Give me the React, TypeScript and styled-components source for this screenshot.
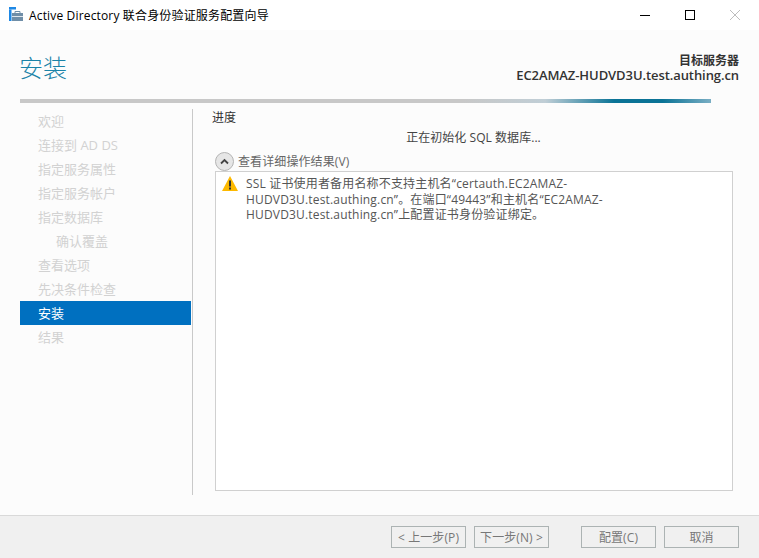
import React from "react";
import styled, { createGlobalStyle } from "styled-components";

const Global = createGlobalStyle`
  html, body { margin: 0; padding: 0; background: #fff; }
  body { font-family: "Open Sans", "Noto Sans CJK SC", sans-serif; font-size: 12px; }
`;

const Win = styled.div`
  width: 759px; height: 558px; display: flex; flex-direction: column; overflow: hidden; background: #fcfcfc;
`;
const TitleBar = styled.div`
  height: 30px; flex: none; background: #fff; display: flex; align-items: center; padding-left: 9px;
`;
const AppIcon = styled.svg`
  flex: none; margin-bottom: 2px;
`;
const TitleText = styled.div`
  font-size: 12px; letter-spacing: 0.16px; color: #000; margin-left: 6px; flex: 1; white-space: nowrap;
`;
const WinBtn = styled.div`
  width: 45px; height: 30px; display: flex; align-items: center; justify-content: center;
`;
const Controls = styled.div`
  display: flex; padding-right: 2px; gap: 0;
`;
const Header = styled.div`
  height: 69px; flex: none; padding: 0 20px; display: flex; justify-content: space-between; align-items: flex-start;
`;
const PageTitle = styled.h1`
  margin: 18px 0 0 -1px; font-size: 24px; font-weight: 300; line-height: 40px; color: #1a83a8;
`;
const Server = styled.div`
  margin-top: 23px; text-align: right; color: #333; font-size: 12px; line-height: 15px; font-weight: 600;
`;
const ServerName = styled.div`
  font-size: 13px; letter-spacing: -0.08px; white-space: nowrap;
`;
const Rule = styled.div`
  height: 4px; flex: none; margin: 0 48px 0 20px;
  background: linear-gradient(90deg, #c8c8c8 0%, #c8c8c8 64%, #c0ced6 76%, #0a7396 86%, #0a7396 93%, #7aaec4 100%);
`;
const Body = styled.div`
  flex: 1; min-height: 0; display: flex; padding: 6px 26px 0 20px;
`;
const Side = styled.nav`
  width: 172px; flex: none; margin-right: 21px; height: 386px; border-right: 1px solid #c9c9c9; box-sizing: content-box;
`;
const SideItem = styled.div<{ $active?: boolean; $indent?: boolean }>`
  height: 24px; margin-right: 1px; line-height: 24px; font-size: 13px; white-space: nowrap;
  padding-left: ${(p) => (p.$indent ? 36 : 18)}px;
  color: ${(p) => (p.$active ? "#fff" : "#d2d2d2")};
  background: ${(p) => (p.$active ? "#0070c0" : "transparent")};
`;
const Main = styled.div`
  flex: 1; min-width: 0; display: flex; flex-direction: column; margin-left: -2px;
`;
const Label = styled.div`
  font-size: 12px; line-height: 16px; color: #333; margin-top: 1px;
`;
const Status = styled.div`
  font-size: 12px; letter-spacing: 0.05px; line-height: 16px; color: #444; text-align: center; margin-top: 4px; padding-left: 2px;
`;
const Toggle = styled.div`
  display: flex; align-items: center; gap: 4px; margin: 5px 0 0 3px; height: 20px; color: #666; font-size: 12px; letter-spacing: 0.1px;
`;
const ToggleBtn = styled.div`
  width: 19px; height: 19px; box-sizing: border-box; border-radius: 50%; border: 1px solid #b4b4b4; background: #e6e6e6;
  display: flex; align-items: center; justify-content: center;
`;
const ResultBox = styled.div`
  margin: 0 0 0 3px; height: 320px; border: 1px solid #d0d0d0; background: #fff; display: flex; padding: 4px 6px 0 6px; box-sizing: border-box;
`;
const Message = styled.div`
  margin-left: 8px; font-size: 12px; letter-spacing: 0.17px; line-height: 15.5px; color: #555; width: 400px;
`;
const Footer = styled.div`
  height: 42px; flex: none; background: #f0f0f0; border-top: 1px solid #d9d9d9; display: flex; align-items: center; justify-content: flex-end; padding: 0 20px 0 0; box-sizing: content-box;
`;
const Btn = styled.div<{ $gap?: number }>`
  width: 75px; height: 22px; box-sizing: border-box; border: 1px solid #acb3b3; color: #777; font-size: 12px; letter-spacing: 0.1px;
  display: flex; align-items: center; justify-content: center; margin-left: ${(p) => p.$gap ?? 8}px; white-space: nowrap;
`;

const items = ["欢迎", "连接到 AD DS", "指定服务属性", "指定服务帐户", "指定数据库", "确认覆盖", "查看选项", "先决条件检查", "安装", "结果"];

export default function App() {
  return (
    <Win>
      <Global />
      <TitleBar>
        <AppIcon width="14" height="14" viewBox="0 0 14 14">
          <rect x="0" y="0" width="7" height="2.5" fill="#1e88e5" />
          <rect x="0" y="2.5" width="2.5" height="11.5" fill="#1e88e5" />
          <rect x="3" y="6" width="11" height="8" fill="#6f8ea8" />
          <rect x="3" y="9" width="11" height="1" fill="#dfe6ec" />
          <path d="M6 6V4.5h5V6" fill="none" stroke="#6f8ea8" strokeWidth="1" />
        </AppIcon>
        <TitleText>Active Directory 联合身份验证服务配置向导</TitleText>
        <Controls>
          <WinBtn>
            <svg width="10" height="10"><path d="M0 5.5h10" stroke="#000" /></svg>
          </WinBtn>
          <WinBtn>
            <svg width="10" height="10"><rect x=".5" y=".5" width="9" height="9" fill="none" stroke="#000" /></svg>
          </WinBtn>
          <WinBtn>
            <svg width="10" height="10"><path d="M0 0l10 10M10 0L0 10" stroke="#bdbdbd" /></svg>
          </WinBtn>
        </Controls>
      </TitleBar>
      <Header>
        <PageTitle>安装</PageTitle>
        <Server>
          <div>目标服务器</div>
          <ServerName>EC2AMAZ-HUDVD3U.test.authing.cn</ServerName>
        </Server>
      </Header>
      <Rule />
      <Body>
        <Side>
          {items.map((t) => (
            <SideItem key={t} $active={t === "安装"} $indent={t === "确认覆盖"}>{t}</SideItem>
          ))}
        </Side>
        <Main>
          <Label>进度</Label>
          <Status>正在初始化 SQL 数据库...</Status>
          <Toggle>
            <ToggleBtn>
              <svg width="9" height="7" viewBox="0 0 9 7"><path d="M1 5.5L4.5 2 8 5.5" fill="none" stroke="#444" strokeWidth="1.8" /></svg>
            </ToggleBtn>
            查看详细操作结果(V)
          </Toggle>
          <ResultBox>
            <svg width="16" height="15" viewBox="0 0 16 15" style={{ flex: "none" }}>
              <path d="M8 0L16 15H0z" fill="#fdb900" />
              <rect x="7" y="4.5" width="2" height="6" fill="#333" />
              <rect x="7" y="11.5" width="2" height="2" fill="#333" />
            </svg>
            <Message>
              SSL 证书使用者备用名称不支持主机名“certauth.EC2AMAZ-HUDVD3U.test.authing.cn”。在端口“49443”和主机名“EC2AMAZ-HUDVD3U.test.authing.cn”上配置证书身份验证绑定。
            </Message>
          </ResultBox>
        </Main>
      </Body>
      <Footer>
        <Btn>&lt; 上一步(P)</Btn>
        <Btn>下一步(N) &gt;</Btn>
        <Btn $gap={32}>配置(C)</Btn>
        <Btn>取消</Btn>
      </Footer>
    </Win>
  );
}
